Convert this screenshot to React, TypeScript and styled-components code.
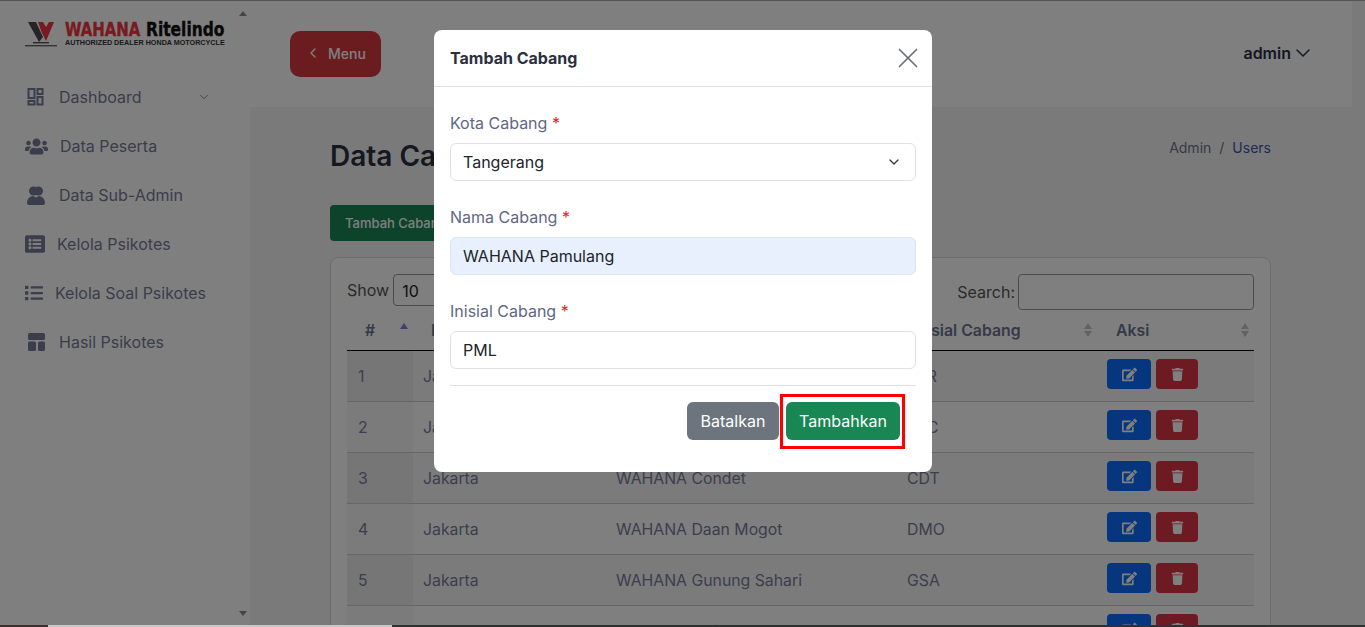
import styled, { createGlobalStyle } from 'styled-components';
import { ChevronDown, ChevronLeft, X } from 'lucide-react';
import { FaEdit, FaList, FaListAlt, FaTrash, FaUsers } from 'react-icons/fa';

const GlobalStyle = createGlobalStyle`
  html, body {
    margin: 0;
    padding: 0;
    overflow: hidden;
    background: #fff;
    font-family: Inter, 'Liberation Sans', sans-serif;
  }
  * { box-sizing: border-box; }
`;

const Page = styled.div`
  display: flex;
  flex-direction: column;
  width: 1365px;
  height: 627px;
  overflow: hidden;
`;

const TopLine = styled.div`
  flex: none;
  height: 1px;
  background: #aaa;
`;

const Body = styled.div`
  display: flex;
  flex: 1;
  min-height: 0;
`;

const Sidebar = styled.aside`
  display: flex;
  flex: none;
  width: 250px;
  background: #fff;
`;

const SideInner = styled.div`
  flex: 1;
`;

const ScrollTrack = styled.div`
  display: flex;
  flex: none;
  flex-direction: column;
  justify-content: space-between;
  align-items: center;
  width: 14px;
  padding: 10px 0 9px;
`;

const Arrow = styled.span<{ $down?: boolean }>`
  width: 0;
  height: 0;
  border-left: 4px solid transparent;
  border-right: 4px solid transparent;
  ${({ $down }) => ($down ? 'border-top: 5px solid #8a8a8a;' : 'border-bottom: 5px solid #8a8a8a;')}
`;

const Brand = styled.div`
  display: flex;
  gap: 8px;
  padding: 19px 0 0 25px;
  height: 72px;
`;

const BrandText = styled.div`
  display: flex;
  flex-direction: column;
  width: 162px;
`;

const BrandName = styled.div`
  display: flex;
  gap: 6px;
  height: 19px;
  font-family: 'DejaVu Sans', sans-serif;
  font-stretch: condensed;
  font-size: 20px;
  line-height: 19px;
  font-weight: 700;
  white-space: nowrap;
`;

const BrandWord = styled.span<{ $red?: boolean; $w: number; $scale: number }>`
  display: inline-block;
  width: ${({ $w }) => $w}px;
  color: ${({ $red }) => ($red ? '#f0343f' : '#111')};
  transform-origin: left center;
  transform: scaleX(${({ $scale }) => $scale});
  -webkit-text-stroke: 0.4px currentColor;
`;

const BrandTag = styled.div`
  font-family: 'Liberation Sans', sans-serif;
  font-size: 7.2px;
  line-height: 8px;
  font-weight: 700;
  color: #333;
  white-space: nowrap;
`;

const Nav = styled.nav`
  display: flex;
  flex-direction: column;
  gap: 27px;
  padding: 13px 0 0 25px;
`;

const NavItem = styled.div`
  display: flex;
  align-items: center;
  gap: 12px;
  height: 22px;
  padding-right: 25px;
  font-size: 16px;
  color: #757b98;
  svg { flex: none; }
`;

const NavLabel = styled.span`
  flex: 1;
  white-space: nowrap;
`;

const Main = styled.main`
  position: relative;
  flex: 1;
  min-width: 0;
  background: #f5f5f5;
`;

const Header = styled.header`
  display: flex;
  align-items: center;
  justify-content: space-between;
  width: 1102px;
  height: 106px;
  padding: 0 37px 0 40px;
  background: #fff;
`;

const MenuButton = styled.button`
  display: flex;
  align-items: center;
  gap: 7px;
  width: 91px;
  height: 46px;
  padding: 0 0 2px 15px;
  border: 0;
  border-radius: 10px;
  background: #d4383c;
  color: #fff;
  font: 500 14px Inter, sans-serif;
`;

const UserMenu = styled.div`
  display: flex;
  align-items: center;
  margin-top: -3px;
  font-size: 16px;
  font-weight: 600;
  color: #2b3041;
`;

const Content = styled.section`
  padding: 0 94px 0 80px;
`;

const TitleRow = styled.div`
  display: flex;
  align-items: center;
  justify-content: space-between;
  height: 98px;
`;

const Title = styled.h1`
  margin: 0;
  font-size: 28px;
  font-weight: 600;
  color: #2b3041;
`;

const Crumbs = styled.div`
  display: flex;
  gap: 8px;
  margin-top: -18px;
  font-size: 14px;
  color: #6d7391;
`;

const CrumbLink = styled.span`
  color: #4154b3;
`;

const AddButton = styled.button`
  display: block;
  width: 130px;
  height: 36px;
  padding: 0 0 0 15px;
  border: 0;
  border-radius: 4px;
  background: #198754;
  color: #fff;
  font: 500 13px Inter, sans-serif;
  text-align: left;
  white-space: nowrap;
  overflow: hidden;
`;

const Card = styled.div`
  height: 400px;
  margin-top: 16px;
  padding: 16px 16px 0;
  border: 1px solid #d9d9d9;
  border-radius: 8px;
  background: #fff;
`;

const Controls = styled.div`
  display: flex;
  justify-content: space-between;
  height: 37px;
  font-size: 16px;
  color: #555;
`;

const ControlLabel = styled.label`
  display: flex;
  align-items: flex-start;
  gap: 4px;
  line-height: 32px;
`;

const SearchLabel = styled(ControlLabel)`
  gap: 3px;
  line-height: 36px;
`;

const ShowBox = styled.div`
  width: 80px;
  height: 32px;
  padding-left: 8px;
  border: 1px solid #999;
  border-radius: 4px;
  color: #222;
`;

const SearchBox = styled.div`
  width: 236px;
  height: 36px;
  border: 1px solid #999;
  border-radius: 4px;
`;

const Table = styled.table`
  width: 907px;
  table-layout: fixed;
  border-collapse: collapse;
  font-size: 15.8px;
  color: #787d9b;
`;

const HeadCell = styled.th<{ $w: number; $pad?: number }>`
  position: relative;
  width: ${({ $w }) => $w}px;
  height: 39px;
  padding: 0 0 0 ${({ $pad }) => $pad ?? 10}px;
  border-bottom: 1px solid #000;
  text-align: left;
  font-weight: 600;
  color: #6d7391;
`;

const SortMark = styled.span`
  position: absolute;
  top: 12px;
  right: 5px;
  display: flex;
  flex-direction: column;
  gap: 2px;
`;

const SortUp = styled.span<{ $active?: boolean }>`
  width: 0;
  height: 0;
  border-left: 4px solid transparent;
  border-right: 4px solid transparent;
  border-bottom: 6px solid ${({ $active }) => ($active ? '#7a7fd8' : '#c4c4c4')};
`;

const SortDown = styled.span`
  width: 0;
  height: 0;
  border-left: 4px solid transparent;
  border-right: 4px solid transparent;
  border-top: 6px solid #c4c4c4;
`;

const Row = styled.tr<{ $odd: boolean }>`
  height: 51px;
  background: ${({ $odd }) => ($odd ? '#f7f7f7' : '#fff')};
`;

const Cell = styled.td`
  padding: 2px 0 0 10px;
  border-bottom: 1px solid #ccc;
  white-space: nowrap;
`;

const NumCell = styled(Cell)<{ $odd: boolean }>`
  padding-left: 11px;
  background: ${({ $odd }) => ($odd ? '#ececec' : '#f6f6f6')};
`;

const Actions = styled.div`
  display: flex;
  gap: 5px;
  margin-top: -5px;
`;

const IconButton = styled.button<{ $bg: string; $w: number }>`
  display: flex;
  align-items: center;
  justify-content: center;
  width: ${({ $w }) => $w}px;
  height: 30px;
  padding: 0;
  border: 0;
  border-radius: 4px;
  background: ${({ $bg }) => $bg};
  color: #fff;
`;

const Backdrop = styled.div`
  position: fixed;
  top: 0;
  left: 0;
  z-index: 10;
  display: flex;
  justify-content: center;
  width: 1365px;
  height: 627px;
  padding: 30px 1px 0 2px;
  background: rgba(0, 0, 0, 0.5);
`;

const Modal = styled.div`
  width: 498px;
  height: 442px;
  border-radius: 8px;
  background: #fff;
`;

const ModalHead = styled.div`
  display: flex;
  align-items: center;
  justify-content: space-between;
  height: 57px;
  padding: 0 7px 0 16px;
  border-bottom: 1px solid #dee2e6;
`;

const ModalTitle = styled.h2`
  margin: 0;
  font-size: 16px;
  font-weight: 700;
  color: #2b3041;
`;

const CloseIcon = styled(X)`
  color: #6b6f76;
`;

const Form = styled.form`
  display: flex;
  flex-direction: column;
  gap: 26px;
  padding: 26px 16px 0;
`;

const Field = styled.div`
  display: flex;
  flex-direction: column;
  gap: 8px;
`;

const FieldLabel = styled.label`
  height: 22px;
  font-size: 16px;
  line-height: 20px;
  color: #5f6785;
`;

const Required = styled.span`
  color: #dc1f26;
`;

const Control = styled.div<{ $filled?: boolean }>`
  display: flex;
  align-items: center;
  justify-content: space-between;
  height: 38px;
  padding: 0 13px 0 12px;
  border: 1px solid ${({ $filled }) => ($filled ? '#dde4f2' : '#dee2e6')};
  border-radius: 6px;
  background: ${({ $filled }) => ($filled ? '#e8f0fe' : '#fff')};
  font-size: 16px;
  color: #212529;
`;

const Footer = styled.div`
  display: flex;
  justify-content: flex-end;
  gap: 7px;
  margin: 16px 16px 0;
  padding: 16px 16px 0 0;
  border-top: 1px solid #dee2e6;
`;

const ModalButton = styled.button<{ $bg: string; $w: number }>`
  width: ${({ $w }) => $w}px;
  height: 38px;
  padding: 0;
  border: 0;
  border-radius: 6px;
  background: ${({ $bg }) => $bg};
  color: #fff;
  font: 400 16px Inter, sans-serif;
`;

const Highlighted = styled.div`
  position: relative;
`;

const HighlightBox = styled.span`
  position: absolute;
  inset: -8px -5px -9px -6px;
  border: 3px solid #f00;
  pointer-events: none;
`;

const BottomStrip = styled.div`
  position: relative;
  z-index: 20;
  display: flex;
  flex: none;
  height: 2px;
`;

const StripPart = styled.span<{ $w?: number; $c: string }>`
  flex: ${({ $w }) => ($w ? `0 0 ${$w}px` : 1)};
  background: ${({ $c }) => $c};
`;

const rows = [
  ['Jakarta', 'WAHANA Bintaro', 'BTR'],
  ['Jakarta', 'WAHANA Ciledug', 'CLC'],
  ['Jakarta', 'WAHANA Condet', 'CDT'],
  ['Jakarta', 'WAHANA Daan Mogot', 'DMO'],
  ['Jakarta', 'WAHANA Gunung Sahari', 'GSA'],
  ['Jakarta', 'WAHANA Jatinegara', 'JTN'],
];

const WMark = () => (
  <svg width="32" height="27" viewBox="0 0 32 27">
    <path d="M3 2h8l7 15-4 5z" fill="#4a4a4a" />
    <path d="M17 13 13 2h5l3 5 3-5h5L21 21z" fill="#f0343f" />
    <rect x="8" y="22" width="16" height="1.4" fill="#555" />
    <rect x="0" y="25" width="32" height="1.4" fill="#666" />
  </svg>
);

const DashboardIcon = () => (
  <svg width="22" height="18" viewBox="0 0 22 18" fill="none" stroke="currentColor" strokeWidth="2">
    <rect x="3.5" y="1" width="6" height="9" />
    <rect x="12.5" y="1" width="5" height="5" />
    <rect x="3.5" y="13" width="6" height="3.5" />
    <rect x="12.5" y="9" width="5" height="7.5" />
  </svg>
);

const SubAdminIcon = () => (
  <svg width="22" height="19" viewBox="0 0 22 19" fill="currentColor">
    <circle cx="8.5" cy="5" r="4.5" />
    <circle cx="13.5" cy="5" r="4.5" />
    <path d="M2 17c0-4 3-7 6-7l3 1.5 3-1.5c3 0 6 3 6 7 0 1-1 2-2 2H4c-1 0-2-1-2-2z" />
  </svg>
);

const LayoutIcon = () => (
  <svg width="22" height="18" viewBox="0 0 22 18" fill="currentColor">
    <rect x="3" y="0" width="17" height="7" rx="1.5" />
    <rect x="3" y="8.5" width="8" height="9.5" rx="1.5" />
    <rect x="13" y="8.5" width="7" height="9.5" rx="1.5" />
  </svg>
);

export default function App(): JSX.Element {
  return (
    <Page>
      <GlobalStyle />
      <TopLine />
      <Body>
        <Sidebar>
          <SideInner>
            <Brand>
              <WMark />
              <BrandText>
                <BrandName>
                  <BrandWord $red $w={75} $scale={0.83}>WAHANA</BrandWord>
                  <BrandWord $w={80} $scale={0.86}>Ritelindo</BrandWord>
                </BrandName>
                <BrandTag>AUTHORIZED DEALER HONDA MOTORCYCLE</BrandTag>
              </BrandText>
            </Brand>
            <Nav>
              <NavItem>
                <DashboardIcon />
                <NavLabel>Dashboard</NavLabel>
                <ChevronDown size={14} strokeWidth={1.5} />
              </NavItem>
              <NavItem>
                <FaUsers size={23} />
                <NavLabel>Data Peserta</NavLabel>
              </NavItem>
              <NavItem>
                <SubAdminIcon />
                <NavLabel>Data Sub-Admin</NavLabel>
              </NavItem>
              <NavItem>
                <FaListAlt size={20} />
                <NavLabel>Kelola Psikotes</NavLabel>
              </NavItem>
              <NavItem>
                <FaList size={18} />
                <NavLabel>Kelola Soal Psikotes</NavLabel>
              </NavItem>
              <NavItem>
                <LayoutIcon />
                <NavLabel>Hasil Psikotes</NavLabel>
              </NavItem>
            </Nav>
          </SideInner>
          <ScrollTrack>
            <Arrow />
            <Arrow $down />
          </ScrollTrack>
        </Sidebar>
        <Main>
          <Header>
            <MenuButton>
              <ChevronLeft size={16} strokeWidth={2} />
              Menu
            </MenuButton>
            <UserMenu>
              admin
              <ChevronDown size={24} strokeWidth={1.5} />
            </UserMenu>
          </Header>
          <Content>
            <TitleRow>
              <Title>Data Cabang</Title>
              <Crumbs>
                <span>Admin</span>
                <span>/</span>
                <CrumbLink>Users</CrumbLink>
              </Crumbs>
            </TitleRow>
            <AddButton>Tambah Cabang</AddButton>
            <Card>
              <Controls>
                <ControlLabel>
                  Show
                  <ShowBox>10</ShowBox>
                </ControlLabel>
                <SearchLabel>
                  Search:
                  <SearchBox />
                </SearchLabel>
              </Controls>
              <Table>
                <thead>
                  <tr>
                    <HeadCell $w={66} $pad={18}>
                      #
                      <SortMark>
                        <SortUp $active />
                      </SortMark>
                    </HeadCell>
                    <HeadCell $w={193} $pad={18}>
                      Kota Cabang
                      <SortMark>
                        <SortUp />
                        <SortDown />
                      </SortMark>
                    </HeadCell>
                    <HeadCell $w={291} $pad={18}>
                      Nama Cabang
                      <SortMark>
                        <SortUp />
                        <SortDown />
                      </SortMark>
                    </HeadCell>
                    <HeadCell $w={200} $pad={16}>
                      Inisial Cabang
                      <SortMark>
                        <SortUp />
                        <SortDown />
                      </SortMark>
                    </HeadCell>
                    <HeadCell $w={157} $pad={19}>
                      Aksi
                      <SortMark>
                        <SortUp />
                        <SortDown />
                      </SortMark>
                    </HeadCell>
                  </tr>
                </thead>
                <tbody>
                  {rows.map((row, i) => (
                    <Row key={row[2]} $odd={i % 2 === 0}>
                      <NumCell $odd={i % 2 === 0}>{i + 1}</NumCell>
                      <Cell>{row[0]}</Cell>
                      <Cell>{row[1]}</Cell>
                      <Cell>{row[2]}</Cell>
                      <Cell>
                        <Actions>
                          <IconButton $bg="#0d6efd" $w={44}>
                            <FaEdit size={15} />
                          </IconButton>
                          <IconButton $bg="#dc3545" $w={42}>
                            <FaTrash size={13} />
                          </IconButton>
                        </Actions>
                      </Cell>
                    </Row>
                  ))}
                </tbody>
              </Table>
            </Card>
          </Content>
        </Main>
      </Body>
      <BottomStrip>
        <StripPart $w={48} $c="#3a2f2c" />
        <StripPart $w={344} $c="#c8c8c8" />
        <StripPart $c="#2f3030" />
      </BottomStrip>
      <Backdrop>
        <Modal>
          <ModalHead>
            <ModalTitle>Tambah Cabang</ModalTitle>
            <CloseIcon size={34} strokeWidth={1.2} />
          </ModalHead>
          <Form>
            <Field>
              <FieldLabel>
                Kota Cabang <Required>*</Required>
              </FieldLabel>
              <Control>
                Tangerang
                <ChevronDown size={16} color="#343a40" />
              </Control>
            </Field>
            <Field>
              <FieldLabel>
                Nama Cabang <Required>*</Required>
              </FieldLabel>
              <Control $filled>WAHANA Pamulang</Control>
            </Field>
            <Field>
              <FieldLabel>
                Inisial Cabang <Required>*</Required>
              </FieldLabel>
              <Control>PML</Control>
            </Field>
          </Form>
          <Footer>
            <ModalButton $bg="#6c757d" $w={92}>Batalkan</ModalButton>
            <Highlighted>
              <ModalButton $bg="#198754" $w={114}>Tambahkan</ModalButton>
              <HighlightBox />
            </Highlighted>
          </Footer>
        </Modal>
      </Backdrop>
    </Page>
  );
}
